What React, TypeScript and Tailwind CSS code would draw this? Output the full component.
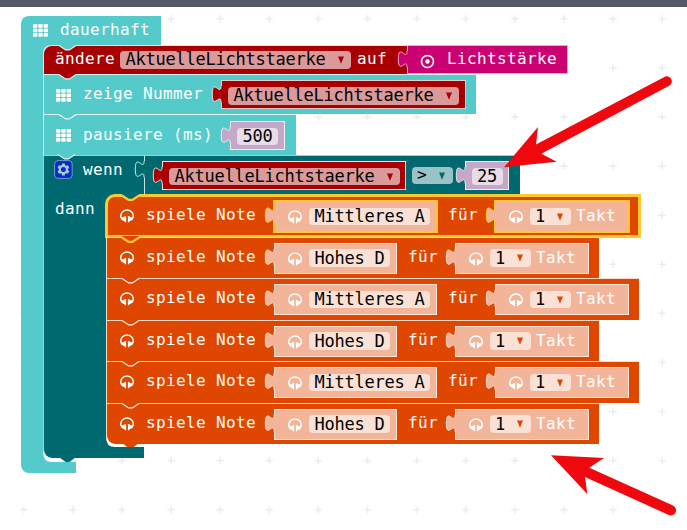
import React from "react";

function Notch({ color, line = "#ffffffdd", width = 1.1 }: { color: string; line?: string; width?: number }) {
  return (
    <svg className="absolute left-[15px] top-[-2px] z-10 overflow-visible" width="18" height="8" viewBox="0 0 18 8">
      <path d="M0 0V1.5L6.6 5.9H10.4L17 1.5V0Z" fill={color} />
      <path d="M0 1.5L6.6 5.9H10.4L17 1.5" fill="none" stroke={line} strokeWidth={width} />
    </svg>
  );
}

function Tab({ color, line }: { color: string; line: string }) {
  return (
    <svg className="absolute left-[-11px] top-[5px] overflow-visible" width="12" height="17" viewBox="-9.2 0 11 15.6">
      <path d="M1.2 0H0C0 10 -8 -8 -8 7.5S0 5 0 15H1.2Z" fill={color} />
      <path d="M0 0C0 10 -8 -8 -8 7.5S0 5 0 15" fill="none" stroke={line} strokeWidth="0.9" />
    </svg>
  );
}

function Text({ children, className = "" }: { children: React.ReactNode; className?: string }) {
  return <span className={`block shrink-0 whitespace-pre leading-[22px] ${className}`}>{children}</span>;
}

function Caret({ color, className = "" }: { color: string; className?: string }) {
  return (
    <svg className={`shrink-0 ${className}`} width="6" height="8" viewBox="0 0 6 8">
      <path d="M0 0.4H6L3 7.8Z" fill={color} />
    </svg>
  );
}

function Value({
  color,
  line = "#ffffffcc",
  className = "",
  children,
}: {
  color: string;
  line?: string;
  className?: string;
  children?: React.ReactNode;
}) {
  return (
    <div className={`relative flex shrink-0 items-start border ${className}`} style={{ backgroundColor: color, borderColor: line }}>
      <Tab color={color} line={line} />
      {children}
    </div>
  );
}

function VariableField({ className = "" }: { className?: string }) {
  return (
    <div className={`flex h-[17.5px] w-[231px] shrink-0 items-start rounded-[4px] bg-[#db9999] pl-[5.5px] text-[17px] tracking-[-0.235px] text-black ${className}`}>
      <Text className="mt-[-3px]">AktuelleLichtstaerke</Text>
      <Caret color="#a80000" className="ml-[12px] mt-[5px]" />
    </div>
  );
}

function NumberField({ children, className = "" }: { children: string; className?: string }) {
  return (
    <div className={`flex h-[17.5px] shrink-0 items-start rounded-[4px] bg-[#e9dcea] px-[5.5px] text-[17px] tracking-[-0.235px] text-black ${className}`}>
      <Text className="mt-[-3px]">{children}</Text>
    </div>
  );
}

function GridIcon({ className = "" }: { className?: string }) {
  return (
    <svg className={`shrink-0 ${className}`} width="15" height="13" viewBox="0 0 15 13" fill="#fff">
      {[0, 5.3, 10.6].map((x) =>
        [0, 4.5, 9].map((y) => <rect key={`${x}-${y}`} x={x} y={y} width="4.4" height="3.7" rx="0.7" />)
      )}
    </svg>
  );
}

function Headphones({ className = "" }: { className?: string }) {
  return (
    <svg className={`shrink-0 ${className}`} width="14" height="14" viewBox="0 0 14 14">
      <path d="M1.1 9C-0.3 4.6 2.8 1.1 7 1.1S14.3 4.6 12.9 9" fill="none" stroke="#fff" strokeWidth="1.5" />
      <path d="M0.5 8.6L4.2 8L4.6 7H6.1V13.2H4.6V12L3.2 11.8L1.2 10.4Z M13.5 8.6L9.8 8L9.4 7H7.9V13.2H9.4V12L10.8 11.8L12.8 10.4Z" fill="#fff" />
    </svg>
  );
}

function Gear() {
  return (
    <svg className="ml-[10px] mt-[4px] shrink-0" width="19" height="19" viewBox="0 0 19 19">
      <rect x="0.6" y="0.6" width="17.6" height="17.8" rx="3.4" fill="#0a2bc8" stroke="#6f9fc4" />
      <g transform="translate(9.4 9.5)">
        {[0, 60, 120, 180, 240, 300].map((a) => (
          <path key={a} d="M-1.9 -3.5L-1.3 -6H1.3L1.9 -3.5Z" fill="#a5cbd6" transform={`rotate(${a})`} />
        ))}
        <circle r="3.5" fill="none" stroke="#a5cbd6" strokeWidth="2" />
      </g>
    </svg>
  );
}

function NoteRow({ note, selected = false, first = false, last = false, above = false }: {
  note: string;
  selected?: boolean;
  first?: boolean;
  last?: boolean;
  above?: boolean;
}) {
  const line = selected ? "#ffc82d" : "#fff0e8cc";
  const shape = `${first ? "rounded-tl-[9px]" : ""} ${last ? "rounded-bl-[9px]" : ""}`;
  return (
    <div className={`relative flex h-[41.5px] w-max items-start border-l border-t border-[#fbd9cb] bg-[#df4600] pr-[10px] ${shape}`}>
      <Headphones className="ml-[12.5px] mt-[13px]" />
      <Text className="ml-[12.5px] mt-[8px]">spiele Note</Text>
      <Value color="#f3b599" line={line} className={`ml-[18px] mt-[5px] h-[31px] pr-[6px] ${selected ? "shadow-[0_0_0_1px_#ffc82d]" : ""}`}>
        <Headphones className="ml-[13px] mt-[8px]" />
        <div className="ml-[7px] mt-[5.5px] flex h-[17.5px] items-start rounded-[4px] bg-[#fae1d6] px-[5.5px] text-[17px] tracking-[-0.235px] text-black">
          <Text className="mt-[-2.5px]">{note}</Text>
        </div>
      </Value>
      <Text className="ml-[11px] mt-[8px]">für</Text>
      <Value color="#f3b599" line={line} className={`ml-[17px] mt-[5px] h-[31px] w-[133.5px] ${selected ? "shadow-[0_0_0_1px_#ffc82d]" : ""}`}>
        <Headphones className="ml-[13px] mt-[8px]" />
        <div className="ml-[7px] mt-[5.5px] flex h-[17.5px] w-[41px] shrink-0 items-start rounded-[4px] bg-[#fae1d6] pl-[5px] text-[17px] tracking-[-0.235px] text-black">
          <Text className="mt-[-2.5px]">1</Text>
          <Caret color="#df4600" className="ml-[12px] mt-[5px]" />
        </div>
        <Text className="ml-[5px] mt-[3px]">Takt</Text>
      </Value>
      {selected && <div className="pointer-events-none absolute -inset-x-[2px] -bottom-[1px] -top-[2px] rounded-tl-[10px] border-[3px] border-[#ffc82d]" />}
      <Notch
        color={first ? "#006970" : "#df4600"}
        line={first || above ? "#ffc82d" : "#fff0e8"}
        width={first || above ? 2.4 : 1.1}
      />
    </div>
  );
}

const notes = ["Mittleres A", "Hohes D", "Mittleres A", "Hohes D", "Mittleres A", "Hohes D"];

export default function App() {
  return (
    <main className="relative h-[530px] w-[687px] overflow-hidden bg-white font-['DejaVu_Sans_Mono',monospace] text-[16px] tracking-[0.367px] text-white">
      <svg className="absolute left-0 top-0" width="687" height="530">
        <defs>
          <pattern id="grid" x="-0.9" y="-5.9" width="49.1" height="49.1" patternUnits="userSpaceOnUse">
            <path d="M20.9 24.6H28.5M24.7 20.8V28.4" stroke="#e6e9e9" strokeWidth="1.2" />
          </pattern>
        </defs>
        <rect width="687" height="530" fill="url(#grid)" />
      </svg>
      <header className="relative h-[7px] bg-[#535967]" />

      <section className="relative ml-[21px] mt-[9px] flex w-max flex-col items-start">
        <div className="flex h-[29px] w-[140px] items-start rounded-tl-[8px] bg-[#55caca]">
          <GridIcon className="ml-[12px] mt-[8px]" />
          <Text className="ml-[12px] mt-[2.5px]">dauerhaft</Text>
        </div>
        <div className="flex">
          <div className="w-[22px] bg-[#55caca]" />
          <div className="relative flex h-[417px] flex-col items-start">
            <svg className="absolute left-0 top-0" width="9" height="417">
              <path d="M0 0H9Q0 0 0 9Z M0 407Q0 417 9 417H0Z" fill="#55caca" />
            </svg>

            <div className="relative flex h-[29px] items-start rounded-tl-[9px] border-l border-t border-[#f6dada] bg-[#a80000]">
              <Notch color="#55caca" />
              <Text className="ml-[11px] mt-[2px]">ändere</Text>
              <VariableField className="ml-[5px] mt-[5px]" />
              <Text className="ml-[6px] mt-[2px]">auf</Text>
              <Value color="#cb0073" line="#f0a6cf" className="ml-[20px] mt-[-1px] h-[29px] w-[161px]">
                <svg className="ml-[12px] mt-[7.5px] shrink-0" width="15" height="15" viewBox="0 0 15 15">
                  <circle cx="7.5" cy="7.5" r="6" fill="none" stroke="#fff" strokeWidth="1.6" />
                  <circle cx="7.5" cy="7.5" r="2.2" fill="#fff" />
                </svg>
                <Text className="ml-[12px] mt-[2px]">Lichtstärke</Text>
              </Value>
            </div>

            <div className="relative flex h-[40px] w-[433px] items-start border-l border-t border-[#e4f8f8] bg-[#55caca]">
              <Notch color="#a80000" />
              <GridIcon className="ml-[12px] mt-[14px]" />
              <Text className="ml-[12px] mt-[8px]">zeige Nummer</Text>
              <Value color="#a80000" className="ml-[18px] mt-[5px] h-[29px] w-[245px]">
                <VariableField className="ml-[6px] mt-[6px]" />
              </Value>
            </div>

            <div className="relative flex h-[41px] w-[252.5px] items-start border-l border-t border-[#e4f8f8] bg-[#55caca]">
              <Notch color="#55caca" />
              <GridIcon className="ml-[12px] mt-[14px]" />
              <Text className="ml-[12px] mt-[8.5px]">pausiere (ms)</Text>
              <Value color="#c5a7c8" className="ml-[17px] mt-[6px] h-[29px] w-[54.5px]">
                <NumberField className="ml-[6px] mt-[5.5px]">500</NumberField>
              </Value>
            </div>

            <div className="relative flex flex-col items-start">
              <Notch color="#55caca" />
              <div className="flex h-[40.2px] w-[477px] items-start border-l border-t border-[#a3cccf] bg-[#006970]">
                <Gear />
                <Text className="ml-[10px] mt-[3px]">wenn</Text>
                <div className="relative ml-[21px] flex h-[39.5px] items-start border-l border-[#cce1e2]">
                  <Tab color="#006970" line="#d5e8e9" />
                  <Value color="#a80000" line="#ffffffdd" className="ml-[17px] mt-[5px] h-[29px] w-[244px]">
                    <VariableField className="ml-[6px] mt-[5.5px]" />
                  </Value>
                  <div className="ml-[6px] mt-[10.5px] flex h-[17.5px] w-[41px] items-start rounded-[4px] bg-[#99c3c6] pl-[5px] text-black">
                    <Text className="mt-[-3px]">&gt;</Text>
                    <Caret color="#006970" className="ml-[12px] mt-[5px]" />
                  </div>
                  <Value color="#c5a7c8" className="ml-[11.5px] mt-[5px] h-[29px] w-[44.5px]">
                    <NumberField className="ml-[6px] mt-[5.5px]">25</NumberField>
                  </Value>
                </div>
              </div>
              <div className="flex">
                <div className="w-[63px] border-l border-[#a3cccf] bg-[#006970] pl-[11px] pt-[3px]">
                  <Text>dann</Text>
                </div>
                <div className="relative flex h-[252px] flex-col items-start">
                  <svg className="absolute left-0 top-0" width="9" height="252">
                    <path d="M0 0H9Q0 0 0 9Z M0 242Q0 252 9 252H0Z" fill="#006970" />
                  </svg>
                  {notes.map((note, i) => (
                    <NoteRow key={i} note={note} first={i === 0} selected={i === 0} above={i === 1} last={i === notes.length - 1} />
                  ))}
                  <svg className="absolute left-[16px] top-[248px]" width="17" height="6">
                    <path d="M0 0H17L10.4 5H6.6Z" fill="#df4600" />
                  </svg>
                </div>
              </div>
              <div className="relative h-[11px] w-[101px] rounded-bl-[9px] border-l border-[#a3cccf] bg-[#006970]">
                <svg className="absolute left-[15px] top-[10px]" width="17" height="6">
                  <path d="M0 0H17L10.4 5H6.6Z" fill="#006970" />
                </svg>
              </div>
            </div>
          </div>
        </div>
        <div className="h-[11px] w-[55px] rounded-bl-[8px] bg-[#55caca]" />
      </section>

      <svg className="pointer-events-none absolute left-0 top-0 z-20" width="687" height="530" fill="#ef090e">
        <path d="M504 167.3L538 127L536 144.5L664.4 76.9A5 5 0 0 1 669.2 85.8L541.3 153.7L556.7 161.7Z" />
        <path d="M551 455.3L604 458L589.3 467.7L673 505.6A5 5 0 0 1 668.8 515L585 477L587.3 494Z" />
      </svg>
    </main>
  );
}
